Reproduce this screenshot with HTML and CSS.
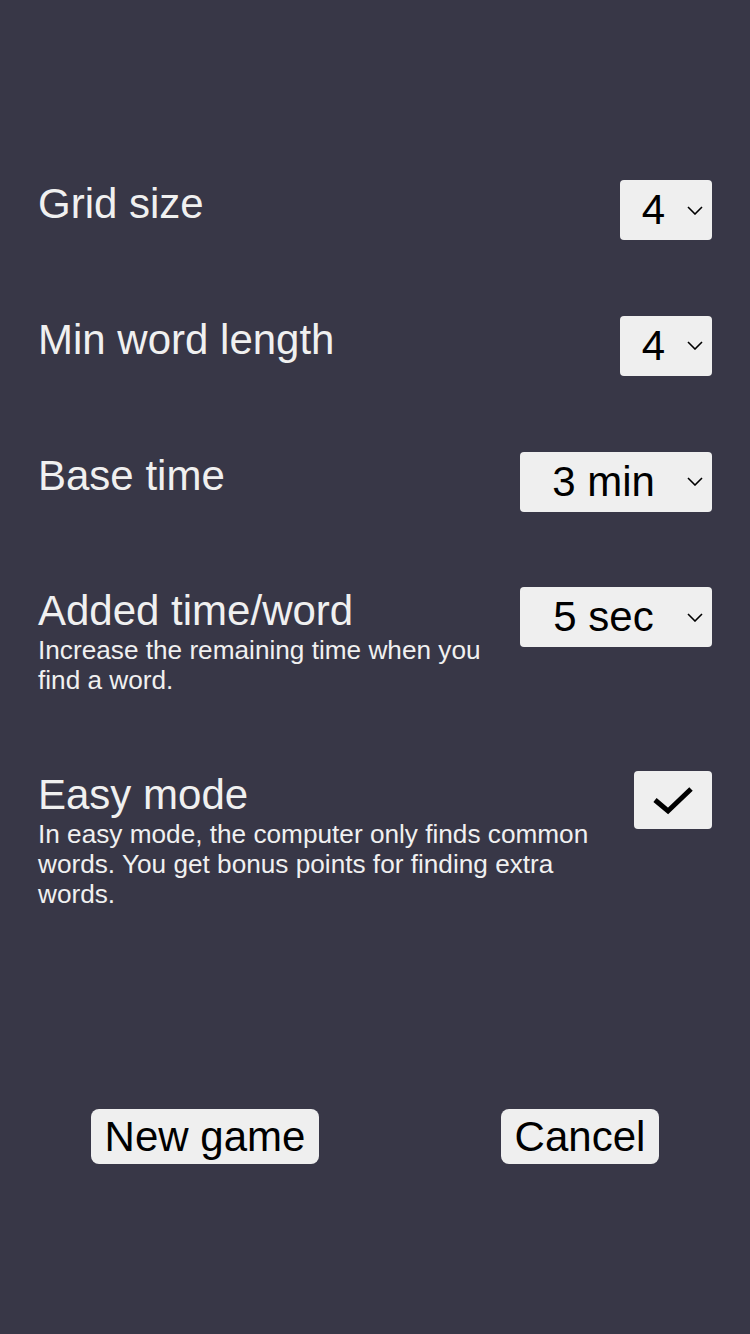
FILE: index.html
```html
<!DOCTYPE html>
<html lang="en">
<head>
<meta charset="utf-8">
<title>Settings</title>
<link rel="stylesheet" href="styles.css">
</head>
<body>
<div class="page">
  <div class="settings">
    <div class="row">
      <div class="label"><div class="title">Grid size</div></div>
      <div class="select small"><span class="value">4</span><svg class="chev" width="16" height="9" viewBox="0 0 16 9"><path d="M1 1 L8 8 L15 1" fill="none" stroke="#000" stroke-width="1.6"/></svg></div>
    </div>
    <div class="row">
      <div class="label"><div class="title">Min word length</div></div>
      <div class="select small"><span class="value">4</span><svg class="chev" width="16" height="9" viewBox="0 0 16 9"><path d="M1 1 L8 8 L15 1" fill="none" stroke="#000" stroke-width="1.6"/></svg></div>
    </div>
    <div class="row">
      <div class="label"><div class="title">Base time</div></div>
      <div class="select large"><span class="value">3 min</span><svg class="chev" width="16" height="9" viewBox="0 0 16 9"><path d="M1 1 L8 8 L15 1" fill="none" stroke="#000" stroke-width="1.6"/></svg></div>
    </div>
    <div class="row">
      <div class="label">
        <div class="title">Added time/word</div>
        <div class="desc">Increase the remaining time when you find a word.</div>
      </div>
      <div class="select large"><span class="value">5 sec</span><svg class="chev" width="16" height="9" viewBox="0 0 16 9"><path d="M1 1 L8 8 L15 1" fill="none" stroke="#000" stroke-width="1.6"/></svg></div>
    </div>
    <div class="row">
      <div class="label">
        <div class="title">Easy mode</div>
        <div class="desc">In easy mode, the computer only finds common words. You get bonus points for finding extra words.</div>
      </div>
      <div class="checkbox"><svg width="40" height="28" viewBox="0 0 40 28"><path d="M2 13 L15 24 L38 2" fill="none" stroke="#000" stroke-width="5"/></svg></div>
    </div>
  </div>
  <div class="buttons">
    <div class="btn">New game</div>
    <div class="btn">Cancel</div>
  </div>
</div>
</body>
</html>
```
FILE: styles.css
```css
html, body {
  margin: 0;
  padding: 0;
}
body {
  background: #383747;
  font-family: "Liberation Sans", Arial, Helvetica, sans-serif;
  color: #f0f0f0;
  width: 750px;
  height: 1334px;
  overflow: hidden;
}
.page {
  display: flex;
  flex-direction: column;
}
.settings {
  padding: 180px 38px 0 38px;
  display: flex;
  flex-direction: column;
  gap: 75.75px;
}
.row {
  display: flex;
  justify-content: space-between;
  align-items: flex-start;
  gap: 20px;
}
.label {
  flex: 1;
}
.title {
  font-size: 42px;
  line-height: 48px;
}
.desc {
  font-size: 26.2px;
  line-height: 30px;
}
.select {
  flex: none;
  height: 60px;
  background: #efefef;
  border-radius: 4px;
  color: #000;
  display: flex;
  align-items: center;
  font-size: 42px;
}
.select.small { width: 92px; }
.select.large { width: 192px; }
.value {
  flex: 1;
  text-align: center;
  line-height: 60px;
}
.chev {
  flex: none;
  margin-right: 9px;
  display: block;
}
.checkbox {
  flex: none;
  width: 78px;
  height: 58px;
  background: #efefef;
  border-radius: 4px;
  display: flex;
  align-items: center;
  justify-content: center;
}
.checkbox svg { display: block; margin-top: 1px; }
.buttons {
  margin-top: 200px;
  display: flex;
  justify-content: space-around;
}
.btn {
  background: #efefef;
  color: #000;
  border-radius: 8px;
  height: 55px;
  line-height: 55px;
  padding: 0 14px;
  font-size: 42px;
}
```
